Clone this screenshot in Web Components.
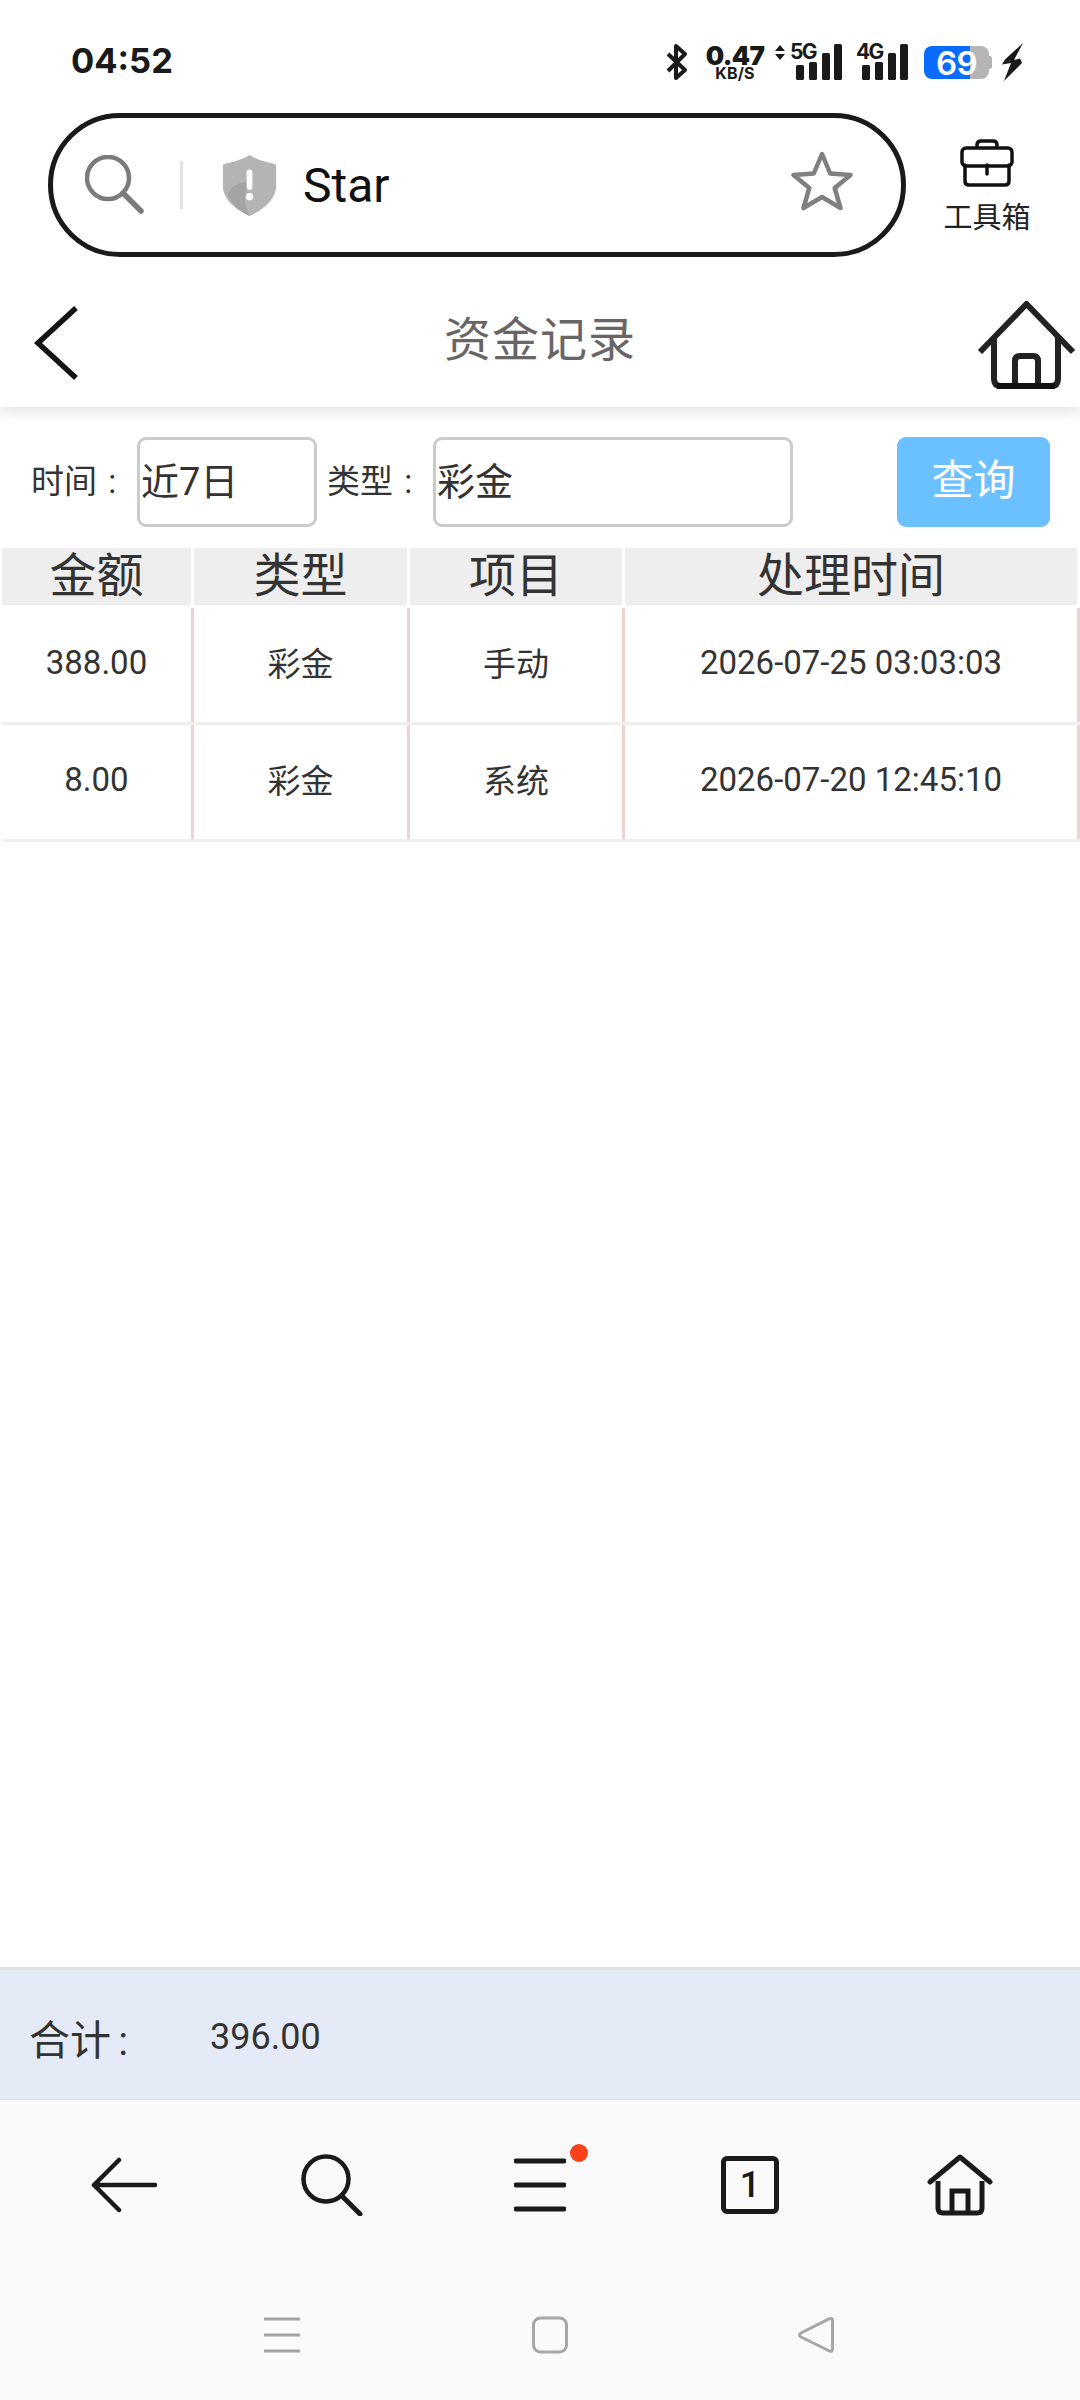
<!DOCTYPE html>
<html lang="zh"><head><meta charset="utf-8"><title>资金记录</title>
<style>
html,body{margin:0;padding:0;background:#fff}
body{width:1080px;height:2400px;font-family:Roboto,"Noto Sans CJK SC",sans-serif;color:#333}
x-page{height:2400px}
</style></head><body>
<x-page>
  <x-status time="04:52"></x-status>
  <x-urlbar text="Star" tool="工具箱"></x-urlbar>
  <x-titlebar title="资金记录"></x-titlebar>
  <x-filter></x-filter>
  <x-table>
    <x-row head><x-cell>金额</x-cell><x-cell>类型</x-cell><x-cell>项目</x-cell><x-cell>处理时间</x-cell></x-row>
    <x-row><x-cell>388.00</x-cell><x-cell>彩金</x-cell><x-cell>手动</x-cell><x-cell>2026-07-25 03:03:03</x-cell></x-row>
    <x-row><x-cell>8.00</x-cell><x-cell>彩金</x-cell><x-cell>系统</x-cell><x-cell>2026-07-20 12:45:10</x-cell></x-row>
  </x-table>
  <x-total label="合计 :" value="396.00"></x-total>
  <x-nav></x-nav>
  <x-gestures></x-gestures>
</x-page>
<script>
const CJK='Roboto,"Noto Sans CJK SC",sans-serif';
function def(name,css,html){
  customElements.define(name,class extends HTMLElement{
    constructor(){super();this.attachShadow({mode:'open'});}
    connectedCallback(){
      const h=typeof html==='function'?html(this):html;
      this.shadowRoot.innerHTML='<style>'+css+'</style>'+h;
    }
  });
}
def('x-page',':host{display:flex;flex-direction:column;width:1080px}::slotted(x-table){flex:1}','<slot></slot>');

def('x-signal',`:host{display:block;position:relative;width:46px;height:36px}
svg{display:block}
span{position:absolute;left:-6px;top:-2px;font:700 21px/20px Inter,sans-serif;letter-spacing:-1.6px;color:#1a1a1a}`,
 `<svg width="46" height="36" viewBox="0 0 46 36"><g fill="#1a1a1a"><rect x="0" y="21" width="8" height="15" rx="1.500"/><rect x="13" y="18" width="8" height="18" rx="1.500"/><rect x="26" y="9" width="8" height="27" rx="1.500"/><rect x="38" y="0" width="8" height="36" rx="1.500"/></g></svg><span><slot></slot></span>`);

def('x-battery',`:host{display:block;position:relative;width:68px;height:33px}
.b{display:flex;height:33px}
.f{width:46px;background:#0a6cff;border-radius:8px 0 0 8px}
.e{width:19px;background:#b5b5b5;border-radius:0 8px 8px 0}
.n{width:3px;height:13px;background:#b5b5b5;align-self:center;border-radius:0 2px 2px 0}
span{position:absolute;left:12px;top:0;font:600 33px/34px Inter,sans-serif;color:#fff;letter-spacing:-.5px}`,
 `<div class="b"><div class="f"></div><div class="e"></div><div class="n"></div></div><span><slot></slot></span>`);

def('x-status',`:host{display:flex;box-sizing:border-box;height:90px;padding:34px 57px 0 71px;align-items:center;justify-content:space-between;color:#1a1a1a}
.t{font:700 34.500px/56px Inter,sans-serif;height:56px;margin-top:-2px}
.r{display:flex;align-items:center}
svg{display:block;flex:none}
.sp{display:flex;flex-direction:column;align-items:center;width:56px;margin:0 12px 0 20px;font-family:Inter,sans-serif;font-weight:700}
.sp b{font-size:26px;line-height:23px;letter-spacing:-.6px}
.sp i{font-style:normal;font-size:16px;line-height:13px;letter-spacing:.2px}
.ar{margin-right:11px;margin-top:-20px}
.s2{margin-left:20px}
.bat{margin-left:16px}
.bo{margin-left:10px}`,
 el=>`<div class="t">${el.getAttribute('time')}</div><div class="r">
 <svg width="21" height="36" viewBox="0 0 21 36"><path d="M2 10 19 26 10 34V2l9 8L2 27" fill="none" stroke="#1a1a1a" stroke-width="4" stroke-linejoin="round"/></svg>
 <div class="sp"><b>0.47</b><i>KB/S</i></div>
 <svg class="ar" width="10" height="15" viewBox="0 0 10 15"><path d="M5 0 10 6H0zM5 15 10 9H0z" fill="#1a1a1a"/></svg>
 <x-signal>5G</x-signal><x-signal class="s2">4G</x-signal>
 <x-battery class="bat">69</x-battery>
 <svg class="bo" width="21" height="38" viewBox="0 0 21 38"><path d="M21 0 3 16.500 0 21.500 9 20 2 38 20 20l-2-4.500-6 1.500z" fill="#1a1a1a"/></svg>
 </div>`);

def('x-urlbar',`:host{display:flex;box-sizing:border-box;height:180px;padding:23px 0 0 48px;align-items:flex-start}
.p{box-sizing:border-box;width:858px;height:144px;border:5px solid #1a1a1a;border-radius:72px;display:flex;align-items:center}
.se{margin-left:32px;flex:none;display:block}
.d{width:3px;height:48px;background:#e2e2e2;margin:0 39px 0 35px;flex:none}
.sh{flex:none;display:block;margin-right:26px}
.tx{font:400 48px/60px Roboto,sans-serif;color:#111;flex:1;margin-top:2px}
.st{flex:none;display:block;margin:-7px 48px 0 0}
.tool{width:162px;display:flex;flex-direction:column;align-items:center}
.tool svg{display:block;margin-top:26px}
.tool span{font:400 29px/36px ${CJK};color:#222;margin-top:13px}`,
 el=>`<div class="p">
 <svg class="se" width="60" height="60" viewBox="0 0 60 60"><circle cx="23" cy="23" r="21" fill="none" stroke="#7b7b7b" stroke-width="4.500"/><path d="M38 38 56 56" stroke="#7b7b7b" stroke-width="5.500" stroke-linecap="round"/></svg>
 <div class="d"></div>
 <svg class="sh" width="55" height="61" viewBox="0 0 55 63"><path d="M27.500 0C34 4 42 7 53 9c2 .5 2 1 2 3v20c0 13-12 24-27.500 31C12 56 0 45 0 32V12c0-2 0-2.500 2-3C13 7 21 4 27.500 0z" fill="#b4b4b4"/><path d="M5 40C10 30 20 27 30 28 22 36 20 48 27.500 63 16 57 8 50 5 40z" fill="#a4a4a4"/><rect x="24.500" y="15" width="6" height="21" rx="3" fill="#fff"/><circle cx="27.500" cy="43" r="3.800" fill="#fff"/></svg>
 <div class="tx">${el.getAttribute('text')}</div>
 <svg class="st" width="62" height="62" viewBox="0 0 62 62"><path d="M31 3l8.200 19.500 20.300 1.500-15.800 13L49.500 57 31 46 12.500 57l5.800-20L2.500 24l20.300-1.500z" fill="none" stroke="#808080" stroke-width="4.500" stroke-linejoin="round"/></svg>
 </div>
 <div class="tool"><svg width="54" height="48" viewBox="0 0 54 48"><path d="M17 9V6q0-4 4-4h12q4 0 4 4v3" fill="none" stroke="#111" stroke-width="3.500"/><rect x="2" y="9" width="50" height="18" rx="4" fill="none" stroke="#111" stroke-width="3.500"/><path d="M5 26v16q0 4 4 4h36q4 0 4-4V26M27 26v9" fill="none" stroke="#111" stroke-width="3.500" stroke-linecap="round"/></svg><span>${el.getAttribute('tool')}</span></div>`);

def('x-titlebar',`:host{display:grid;grid-template-columns:1fr auto 1fr;align-items:center;box-sizing:border-box;height:137px;background:#fff;box-shadow:0 4px 14px rgba(0,0,0,.13);clip-path:inset(0 0 -30px 0);position:relative;z-index:1}
.t{font:400 47px/60px ${CJK};color:#696565;letter-spacing:1px;margin-top:3px}
.b{margin:8px 0 0 33px;display:block;filter:blur(.6px)}
.h{justify-self:end;display:block;filter:blur(.6px);margin:13px 4px 0 0}`,
 el=>`<svg class="b" width="48" height="76" viewBox="0 0 48 76"><path d="M43 3 5 38l38 35" fill="none" stroke="#141414" stroke-width="5.500"/></svg>
 <div class="t">${el.getAttribute('title')}</div>
 <svg class="h" width="99" height="88" viewBox="0 0 99 88"><path d="M3 51 49.500 3 96 51" fill="none" stroke="#222" stroke-width="6" stroke-linejoin="round"/><path d="M17 36V78q0 7 7 7H74q7 0 7-7V36" fill="none" stroke="#222" stroke-width="6"/><path d="M38 85V60q0-5 5-5H56q5 0 5 5V85" fill="none" stroke="#222" stroke-width="6"/><path d="M20 85H78" stroke="#111" stroke-width="6"/></svg>`);

def('x-filter',`:host{display:flex;box-sizing:border-box;height:141px;padding:30px 0 0 31px;align-items:flex-start;color:#333;font-family:${CJK}}
.l{box-sizing:border-box;font-size:33px;line-height:90px;white-space:pre;height:90px;word-spacing:3px}
.i{box-sizing:border-box;height:90px;border:3px solid #cbcbcb;border-radius:9px;font-size:38px;line-height:85px;padding-left:1px;color:#333}
.l1{width:106px}
.a{width:180px}
.l2{width:106px;margin-left:10px}
.c{width:360px}
.q{width:153px;height:90px;margin-left:104px;border-radius:9px;background:#6bc1ff;color:#fff;font-size:42px;line-height:87px;text-align:center}`,
 `<div class="l l1">时间 :</div><div class="i a">近7日</div><div class="l l2">类型 :</div><div class="i c">彩金</div><div class="q">查询</div>`);

def('x-table',':host{display:block;background:#fff}','<slot></slot>');
def('x-row',`:host{display:grid;grid-template-columns:192px 216px 215px 455px;box-sizing:border-box;height:117px;margin-left:2px;width:1078px;border-bottom:3px solid #eee;font-size:33px;color:#333;--pb:6px;--lh:normal}
:host([head]){height:60px;border-bottom:3px solid #fff;font-size:47px;--bg:#eee;--br:#fff;--pb:2px;--lh:48px}`,'<slot></slot>');
def('x-cell',`:host{display:flex;align-items:center;justify-content:center;box-sizing:border-box;background:var(--bg,#fff);border-right:3px solid var(--br,#edd4d4);white-space:nowrap;font-family:${CJK};line-height:var(--lh,normal);padding-bottom:var(--pb,0)}`,'<slot></slot>');

def('x-total',`:host{display:flex;box-sizing:border-box;height:133px;align-items:center;background:#e4ebf6;border-top:3px solid #e0e0e0;border-bottom:1px solid #d8dde4;padding-left:29px;color:#333;font-family:${CJK}}
.l{font-size:41px;width:181px;margin-top:4px;white-space:pre;word-spacing:-3px}
.v{font-size:36px;margin-top:5px}`,
 el=>`<div class="l">${el.getAttribute('label')}</div><div class="v">${el.getAttribute('value')}</div>`);

def('x-nav',`:host{display:grid;grid-template-columns:208px 208px 208px 212px 208px;box-sizing:border-box;height:170px;padding-left:20px;background:#fafafa;align-items:center;justify-items:center}
svg{display:block}
.m{position:relative;width:52px;height:54px}
.dot{position:absolute;left:56px;top:-14px;width:18px;height:18px;border-radius:50%;background:#fb4119}
.tab{box-sizing:border-box;width:58px;height:58px;border:5px solid #1a1a1a;border-radius:6px;display:flex;align-items:center;justify-content:center;font:500 36px/40px Roboto,sans-serif;color:#1a1a1a;margin-top:-1px}`,
 `<svg width="66" height="56" viewBox="0 0 66 56"><path d="M28 3 3 28 28 53M3 28H64" fill="none" stroke="#1a1a1a" stroke-width="4.500" stroke-linecap="round" stroke-linejoin="round"/></svg>
 <svg width="62" height="62" viewBox="0 0 62 62"><circle cx="25" cy="25" r="22.500" fill="none" stroke="#1a1a1a" stroke-width="4.500"/><path d="M41 42 59 60" stroke="#1a1a1a" stroke-width="5" stroke-linecap="round"/></svg>
 <div class="m"><svg width="52" height="54" viewBox="0 0 52 54"><path d="M2 3H50M2 27H50M2 51H50" stroke="#1a1a1a" stroke-width="5" stroke-linecap="round"/></svg><div class="dot"></div></div>
 <div class="tab">1</div>
 <svg width="66" height="62" viewBox="0 0 66 62"><path d="M3 28 33 3 63 28" fill="none" stroke="#1a1a1a" stroke-width="5" stroke-linejoin="round" stroke-linecap="round"/><path d="M11 27V54q0 5 5 5H50q5 0 5-5V27M25 59V37H41V59" fill="none" stroke="#1a1a1a" stroke-width="5"/></svg>`);

def('x-gestures',`:host{display:flex;box-sizing:border-box;height:130px;padding-left:264px;background:#fafafa;align-items:center}
svg{display:block;flex:none}
.q{margin-left:232px}.t{margin-left:230px}`,
 `<svg width="36" height="38" viewBox="0 0 36 38"><path d="M0 3H36M0 19H36M0 35H36" stroke="#a6a6a6" stroke-width="3"/></svg>
 <svg class="q" width="36" height="38" viewBox="0 0 36 38"><rect x="1.500" y="2" width="33" height="34" rx="7" fill="none" stroke="#a6a6a6" stroke-width="3"/></svg>
 <svg class="t" width="36" height="38" viewBox="0 0 36 38"><path d="M33 2.500q1.500 0 1.500 2V33q0 3-3 2L3 21q-3-2 0-4L31 2.800z" fill="none" stroke="#a6a6a6" stroke-width="3" stroke-linejoin="round"/></svg>`);
</script>
</body></html>
